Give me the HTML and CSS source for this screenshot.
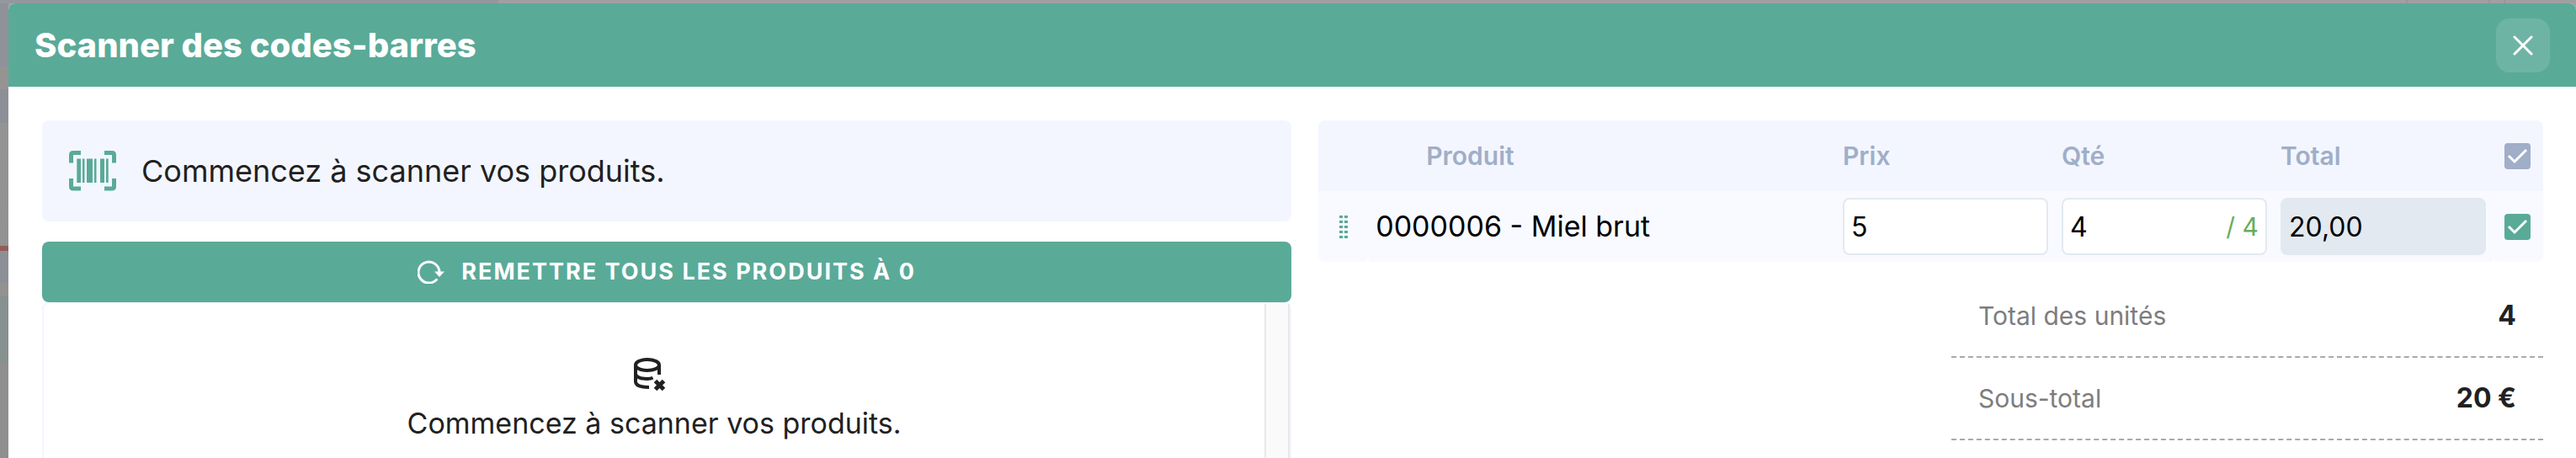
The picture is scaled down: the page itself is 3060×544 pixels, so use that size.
FILE: index.html
```html
<!DOCTYPE html>
<html lang="fr">
<head>
    <meta charset="UTF-8">
    <meta name="viewport" content="width=device-width, initial-scale=1.0">
    <title>Scanner des codes-barres</title>
    <link rel="stylesheet" href="styles.css">
</head>
<body>
    <div class="modal" role="dialog" aria-labelledby="modalTitle">
        <header class="modal-header">
            <h1 id="modalTitle">Scanner des codes-barres</h1>
            <button type="button" class="close" aria-label="Fermer">
                <svg width="24" height="24" viewBox="0 0 24 24" fill="none" stroke="#fff" stroke-width="3" stroke-linecap="round">
                    <path d="M2 2l20 20M22 2L2 22"/>
                </svg>
            </button>
        </header>

        <div class="modal-body">
            <section class="scan">
                <div class="scan-info">
                    <svg width="56" height="48" viewBox="0 0 56 48" fill="#5aaa98">
                        <path d="M0 14.500V5q0-5 5-5h9v5H5v9.500zM42 0h9q5 0 5 5v9.500h-5V5h-9zM0 33h5v9.500h9v5H5q-5 0-5-5zM51 33h5v9.500q0 5-5 5h-9v-5h9z"/>
                        <path d="M9.300 9.500H14v28.500H9.300zM16 9.500h2.500v28.500H16zM21 9.500h7v28.500h-7zM30 9.500h2.500v28.500H30zM37 9.500h5v28.500h-5zM44 9.500h2.700v28.500H44z"/>
                    </svg>
                    <p>Commencez à scanner vos produits.</p>
                </div>
                <button type="button" class="reset">
                    <svg width="32" height="28" viewBox="0 0 32 28">
                        <path d="M22.500 23.300A12.500 12.500 0 1 1 26 14" fill="none" stroke="#fff" stroke-width="3" stroke-linecap="round"/>
                        <path d="M20 13.500h12l-6 6.500z" fill="#fff"/>
                    </svg>
                    Remettre tous les produits à 0
                </button>
                <div class="scan-list">
                    <div class="empty">
                        <svg width="48" height="40" viewBox="0 0 48 40" fill="none" stroke="#212121" stroke-width="4">
                            <ellipse cx="16" cy="8.500" rx="14" ry="6.500"/>
                            <path d="M2 8.500v20c0 4 6 6.500 16 6.500M30 8.500V20M2 19c0 3.500 6 6 14 6 3 0 5-.5 6.500-1.200"/>
                            <path d="M25.500 27.500l10 10M35.500 27.500l-10 10" stroke-width="5"/>
                        </svg>
                        <p>Commencez à scanner vos produits.</p>
                    </div>
                    <div class="scroll-track"></div>
                </div>
            </section>

            <section class="order">
                <table class="products">
                    <thead>
                        <tr>
                            <th class="col-side"></th>
                            <th class="col-name">Produit</th>
                            <th class="col-value">Prix</th>
                            <th class="col-value">Qté</th>
                            <th class="col-value">Total</th>
                            <th class="col-side"><input type="checkbox" class="check check-all" aria-label="Tout sélectionner" checked></th>
                        </tr>
                    </thead>
                    <tbody>
                        <tr>
                            <td class="col-side">
                                <svg width="10" height="27" viewBox="0 0 10 27" fill="#5aaa98">
                                    <path d="M0 0h4v3H0zM6 0h4v3H6zM0 6h4v3H0zM6 6h4v3H6zM0 12h4v3H0zM6 12h4v3H6zM0 18h4v3H0zM6 18h4v3H6zM0 24h4v3H0zM6 24h4v3H6z"/>
                                </svg>
                            </td>
                            <td class="product-name">0000006 - Miel brut</td>
                            <td><input type="text" class="field" aria-label="Prix" value="5"></td>
                            <td>
                                <div class="qty">
                                    <input type="text" class="field" aria-label="Qté" value="4">
                                    <span class="qty-max">/ 4</span>
                                </div>
                            </td>
                            <td><input type="text" class="field field-total" aria-label="Total" value="20,00" readonly></td>
                            <td class="col-side"><input type="checkbox" class="check" aria-label="Sélectionner Miel brut" checked></td>
                        </tr>
                    </tbody>
                </table>
                <dl class="totals">
                    <div class="total-row">
                        <dt>Total des unités</dt>
                        <dd>4</dd>
                    </div>
                    <div class="total-row">
                        <dt>Sous-total</dt>
                        <dd>20 €</dd>
                    </div>
                </dl>
            </section>
        </div>
    </div>
</body>
</html>
```

FILE: styles.css
```css
* {
    box-sizing: border-box;
}
body {
    margin: 0;
    padding: 4px 0 0 10px;
    height: 100vh;
    overflow: hidden;
    font-family: Inter, "Open Sans", sans-serif;
    font-size: 32px;
    line-height: 48px;
    color: #212121;
    /* dimmed page behind the modal */
    background-color: #a0a0a0;
    background-image:
        linear-gradient(90deg, #95979f 592px, transparent 592px, transparent calc(100% - 202px), #93959d calc(100% - 202px), #93959d calc(100% - 200px), transparent calc(100% - 200px), transparent calc(100% - 104px), #93959d calc(100% - 104px), #93959d calc(100% - 102px), transparent calc(100% - 102px), transparent calc(100% - 86px), #93959d calc(100% - 86px), #93959d calc(100% - 84px), transparent calc(100% - 84px)),
        linear-gradient(#8f929a 80px, #969492 80px, #969492 106px, #8d8f97 106px, #8d8f97 146px, #949494 146px, #929292 292px, #935d57 292px, #935d57 298px, #8d8f97 298px, #8d8f97 336px, #949290 336px, #949290 352px, #87918f 352px, #87918f 432px, #8f8f8f 432px);
    background-size: 100% 4px, 10px 100%;
    background-repeat: no-repeat;
}
p, h1, dl, dd {
    margin: 0;
}
button, input {
    font: inherit;
}
.modal {
    height: 100%;
    background-color: #fff;
    border-radius: 8px 8px 0 0;
    overflow: hidden;
}
.modal-header {
    display: flex;
    align-items: center;
    justify-content: space-between;
    height: 99px;
    padding: 0 31px;
    background-color: #5aaa98;
}
h1 {
    font-size: 40px;
    font-weight: 800;
    color: #fff;
}
.close {
    display: flex;
    align-items: center;
    justify-content: center;
    width: 64px;
    height: 64px;
    padding: 0;
    border: none;
    border-radius: 16px;
    background-color: #6eb4a5;
    cursor: pointer;
}
.modal-body {
    display: grid;
    grid-template-columns: minmax(0, 101fr) minmax(0, 99fr);
    gap: 32px;
    height: 100%;
    padding: 40px 39px 40px 40px;
}
.scan {
    display: flex;
    flex-direction: column;
}
.scan-info {
    display: flex;
    align-items: center;
    gap: 30px;
    height: 120px;
    padding: 0 32px;
    border-radius: 8px;
    background-color: #f3f6ff;
}
.scan-info p {
    font-size: 36px;
}
.reset {
    display: flex;
    align-items: center;
    justify-content: center;
    gap: 20px;
    height: 72px;
    margin-top: 24px;
    border: none;
    border-radius: 8px;
    background-color: #5aaa98;
    color: #fff;
    font-size: 27px;
    font-weight: 700;
    text-transform: uppercase;
    letter-spacing: 2px;
    cursor: pointer;
}
.scan-list {
    display: flex;
    flex: 1;
    border: 2px solid #f3f6ff;
    border-radius: 8px;
}
.empty {
    flex: 1;
    display: flex;
    flex-direction: column;
    align-items: center;
    gap: 14px;
    padding-top: 64px;
    font-size: 34px;
}
.scroll-track {
    width: 30px;
    border: solid #e8e8e8;
    border-width: 0 2px;
    background-color: #fafafa;
}
.products {
    width: 100%;
    table-layout: fixed;
    border-collapse: separate;
    border-spacing: 0;
}
.products th,
.products td {
    height: 84px;
    padding: 0 8px;
    text-align: left;
}
.products th {
    background-color: #f3f6ff;
    color: #a0aec8;
    font-size: 30px;
    font-weight: 600;
}
.products td {
    background-color: #f8faff;
    color: #000;
}
.products .col-side {
    width: 60px;
    padding: 0;
    text-align: center;
}
.products .col-name {
    padding-left: 68px;
}
.products .col-value {
    width: 260px;
}
.products .product-name {
    font-size: 34px;
}
.products th:first-child {
    border-top-left-radius: 8px;
}
.products th:last-child {
    border-top-right-radius: 8px;
}
.products td:first-child,
.products td:last-child {
    border-radius: 0 0 8px 8px;
}
.products svg,
.check {
    display: block;
    margin: 0 auto;
}
.field {
    display: block;
    width: 100%;
    height: 68px;
    padding: 0 8px;
    border: 2px solid #e2e9f0;
    border-radius: 8px;
    background-color: #fff;
    color: #000;
}
.field-total {
    background-color: #e2e9f0;
}
.qty {
    position: relative;
}
.qty-max {
    position: absolute;
    top: 10px;
    right: 10px;
    color: #67ad5b;
    font-size: 30px;
}
.check {
    appearance: none;
    width: 31px;
    height: 31px;
    border-radius: 4px;
    background: #5aaa98 url("data:image/svg+xml,%3Csvg xmlns='http://www.w3.org/2000/svg' viewBox='0 0 31 31'%3E%3Cpath d='M5 15l7 7L26 8' fill='none' stroke='%23fff' stroke-width='3'/%3E%3C/svg%3E");
}
.check-all {
    background-color: #a0aec8;
}
.totals {
    width: 703px;
    margin: 16px 0 0 auto;
}
.total-row {
    display: flex;
    align-items: center;
    justify-content: space-between;
    height: 98px;
    padding: 0 32px;
    border-bottom: 2px dashed #aaa;
}
.total-row dt {
    font-size: 30px;
    color: #7d7d7d;
}
.total-row dd {
    font-weight: 700;
}
```
